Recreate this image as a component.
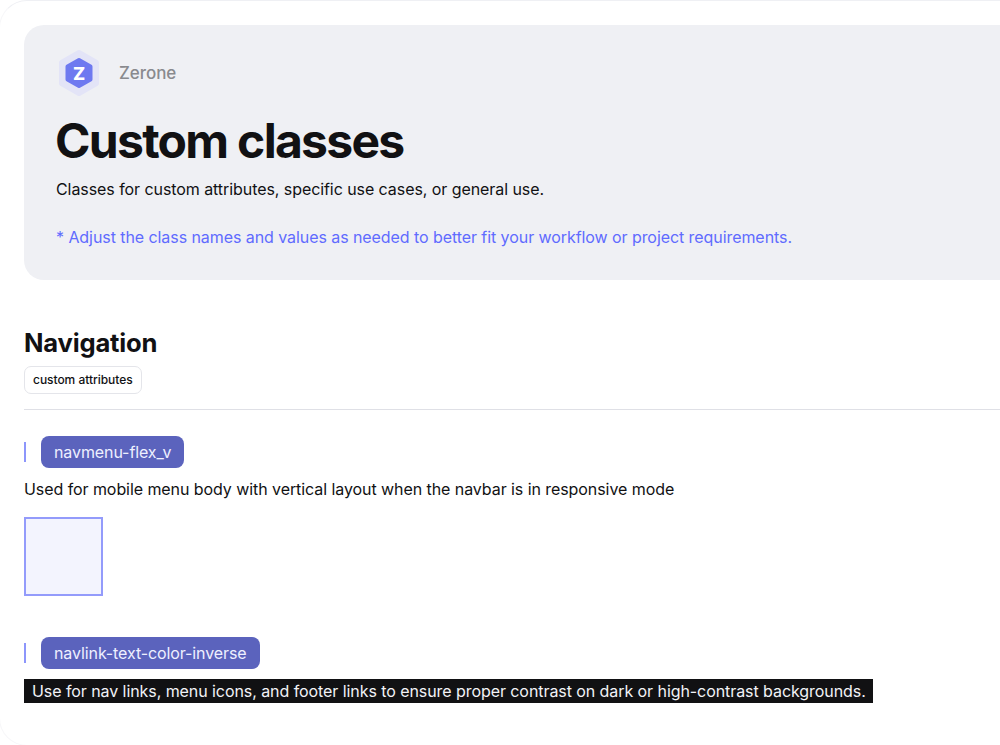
<div class="page">
  <header class="hero">
    <div class="brand">
      <svg class="logo" width="44" height="46" viewBox="0 0 44 46" aria-hidden="true">
        <path d="M22 2.500 39.500 12.500v21L22 43.500 4.500 33.500v-21z" fill="#e3e4f7" stroke="#e3e4f7" stroke-width="5" stroke-linejoin="round" />
        <path d="M22 10 33.500 16.500v13L22 36 10.500 29.500v-13z" fill="#6e79f0" stroke="#6e79f0" stroke-width="4" stroke-linejoin="round" />
        <text x="22" y="29.500" text-anchor="middle" class="logo-z">Z</text>
      </svg>
      <span class="brand-name">Zerone</span>
    </div>
    <h1>Custom classes</h1>
    <p class="lead">Classes for custom attributes, specific use cases, or general use.</p>
    <p class="note">* Adjust the class names and values as needed to better fit your workflow or project requirements.</p>
  </header>

  <section class="section">
    <h2>Navigation</h2>
    <span class="tag">custom attributes</span>
    <hr />

    <div class="class-row">
      <span class="bar"></span>
      <span class="chip">navmenu-flex_v</span>
    </div>
    <p class="desc">Used for mobile menu body with vertical layout when the navbar is in responsive mode</p>
    <div class="swatch"></div>

    <div class="class-row second">
      <span class="bar"></span>
      <span class="chip">navlink-text-color-inverse</span>
    </div>
    <p class="desc inverse"><span>Use for nav links, menu icons, and footer links to ensure proper contrast on dark or high-contrast backgrounds.</span></p>
  </section>
</div>

<style>
  :global(html), :global(body) {
    margin: 0;
    background: #fff;
    overflow: hidden;
  }
  .page {
    box-sizing: border-box;
    width: 1040px;
    height: 746px;
    margin-left: -1px;
    background: #fff;
    border: 1px solid #f7f7f9;
    border-top-color: #eff0f4;
    border-radius: 28px;
    padding: 24px 0 0 24px;
    font-family: Inter, "Liberation Sans", sans-serif;
    color: #111113;
    overflow: hidden;
  }
  .hero {
    box-sizing: border-box;
    width: 1000px;
    height: 255px;
    background: #eff0f4;
    border-radius: 20px;
    padding: 25px 32px 0;
  }
  .brand {
    display: flex;
    align-items: center;
    gap: 18px;
    height: 46px;
  }
  .logo { display: block; margin-left: 1px; }
  .logo-z {
    font: 800 18px Inter, sans-serif;
    fill: #fff;
  }
  .brand-name {
    font-size: 17px;
    font-weight: 500;
    color: #898a8e;
    letter-spacing: -0.05px;
  }
  h1 {
    margin: 17px 0 0 -1px;
    font-size: 48px;
    line-height: 56px;
    font-weight: 700;
    letter-spacing: -1.7px;
  }
  .lead {
    margin: 8px 0 0;
    font-size: 16px;
    line-height: 24px;
    letter-spacing: -0.07px;
  }
  .note {
    margin: 24px 0 0;
    font-size: 16px;
    line-height: 24px;
    color: #5f6bff;
    letter-spacing: -0.07px;
  }
  .section { padding-top: 47px; }
  h2 {
    margin: 0;
    font-size: 25.600px;
    line-height: 32px;
    font-weight: 700;
    letter-spacing: -0.2px;
  }
  .tag {
    display: inline-block;
    box-sizing: border-box;
    margin-top: 7px;
    height: 28px;
    padding: 0 8px;
    border: 1px solid #e4e5ea;
    border-radius: 7px;
    font-size: 12px;
    line-height: 26px;
    font-weight: 500;
    letter-spacing: -0.04px;
    vertical-align: top;
  }
  hr {
    width: 976px;
    height: 1px;
    margin: 15px 0 0;
    border: 0;
    background: #dfe0e6;
  }
  .class-row {
    display: flex;
    align-items: center;
    gap: 15px;
    margin-top: 26px;
    height: 32px;
  }
  .class-row.second { margin-top: 41.500px; }
  .bar {
    width: 2px;
    height: 20px;
    background: #8d96fb;
  }
  .chip {
    padding: 0 13px;
    height: 32px;
    line-height: 32px;
    background: #5b63bd;
    border-radius: 8px;
    color: #eef0ff;
    font-size: 16px;
    letter-spacing: -0.1px;
  }
  .desc {
    margin: 9px 0 0;
    font-size: 16px;
    line-height: 24px;
    letter-spacing: -0.07px;
  }
  .inverse { margin-top: 9.500px; }
  .inverse span {
    display: inline-block;
    padding: 0 7px 0 8px;
    background: #111113;
    color: #f2f3f7;
  }
  .swatch {
    box-sizing: border-box;
    width: 79px;
    height: 79px;
    margin-top: 15.500px;
    background: #f3f4fe;
    border: 2px solid #939bfb;
  }
</style>
